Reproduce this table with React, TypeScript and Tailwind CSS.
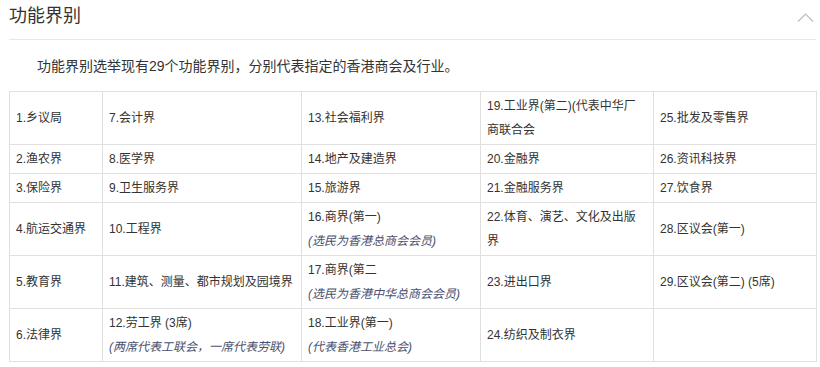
const rows: { text: string; note?: string }[][] = [
  [{ text: "1.乡议局" }, { text: "7.会计界" }, { text: "13.社会福利界" }, { text: "19.工业界(第二)(代表中华厂商联合会" }, { text: "25.批发及零售界" }],
  [{ text: "2.渔农界" }, { text: "8.医学界" }, { text: "14.地产及建造界" }, { text: "20.金融界" }, { text: "26.资讯科技界" }],
  [{ text: "3.保险界" }, { text: "9.卫生服务界" }, { text: "15.旅游界" }, { text: "21.金融服务界" }, { text: "27.饮食界" }],
  [
    { text: "4.航运交通界" },
    { text: "10.工程界" },
    { text: "16.商界(第一)", note: "(选民为香港总商会会员)" },
    { text: "22.体育、演艺、文化及出版界" },
    { text: "28.区议会(第一)" },
  ],
  [
    { text: "5.教育界" },
    { text: "11.建筑、测量、都市规划及园境界" },
    { text: "17.商界(第二", note: "(选民为香港中华总商会会员)" },
    { text: "23.进出口界" },
    { text: "29.区议会(第二) (5席)" },
  ],
  [
    { text: "6.法律界" },
    { text: "12.劳工界 (3席)", note: "(两席代表工联会，一席代表劳联)" },
    { text: "18.工业界(第一)", note: "(代表香港工业总会)" },
    { text: "24.纺织及制衣界" },
    { text: "" },
  ],
];

const widths = ["w-[93px]", "w-[199px]", "w-[179px]", "w-[173px]", "w-[163px]"];

export default function App() {
  return (
    <div className="bg-white w-[820px] h-[367px] overflow-hidden font-['Liberation_Sans','Noto_Sans_CJK_SC',sans-serif] text-[#333]">
      <div className="ml-[9px] w-[807px]">
        {/* header */}
        <div className="h-[40px] flex items-start justify-between border-b border-[#e8e8e8]">
          <h2 className="text-[18px] leading-[26px] pt-[3px] text-[#333]">功能界别</h2>
          <svg width="18" height="12" viewBox="0 0 18 12" className="mt-[11px] mr-[1px]">
            <polyline points="1,10.5 8.5,3 16,10.5" fill="none" stroke="#bdbdbd" strokeWidth="1.2" />
          </svg>
        </div>

        <p className="mt-[14px] mb-[13px] text-[14px] leading-[24px] indent-[28px]">
          功能界别选举现有29个功能界别，分别代表指定的香港商会及行业。
        </p>

        <table className="table-fixed border-collapse w-[807px] text-[12px] leading-[24px]">
          <colgroup>
            {widths.map((w, i) => (
              <col key={i} className={w} />
            ))}
          </colgroup>
          <tbody>
            {rows.map((row, r) => (
              <tr key={r}>
                {row.map((cell, c) => (
                  <td key={c} className="border border-[#e0e0e0] px-[6px] py-[2px] align-middle">
                    <div>{cell.text}</div>
                    {cell.note && <div className="italic text-[#4a5170]">{cell.note}</div>}
                  </td>
                ))}
              </tr>
            ))}
          </tbody>
        </table>
      </div>
    </div>
  );
}
